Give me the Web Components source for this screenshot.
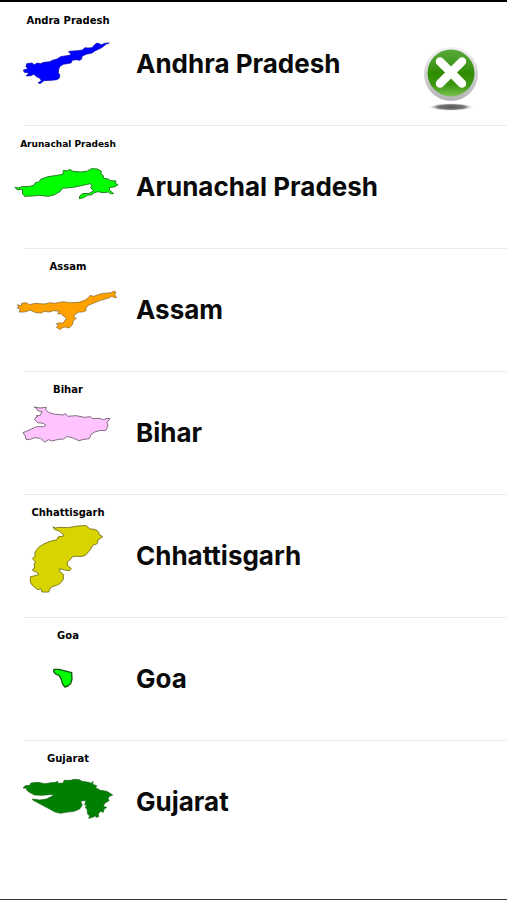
<!DOCTYPE html>
<html lang="en">
<head>
  <meta charset="utf-8">
  <meta name="viewport" content="width=device-width, initial-scale=1">
  <title>States</title>
  <style>
    body {
      margin: 0;
      background: #fff;
      font-family: Inter, "Liberation Sans", sans-serif;
    }
  </style>
</head>
<body>
  <state-picker>
    <close-button slot="action"></close-button>
    <state-row name="Andhra Pradesh" caption="Andra Pradesh">
      <svg viewBox="24 87 360 216" fill="#00f" stroke="#0000a8" stroke-width="2" stroke-linejoin="round"><path d="M328 129L314 130 304 134 292 129 285 133 276 143 264 144 255 143 247 150 233 152 207 154 206 157 213 160 209 166 194 168 182 170 171 177 157 181 150 185 132 187 121 191 112 189 103 194 96 189 80 191 78 200 84 206 70 210 73 217 87 219 78 228 93 227 101 223 110 230 120 235 124 243 114 248 120 251 132 242 155 241 171 239 179 233 179 224 175 218 176 208 180 199 190 193 213 189 217 181 229 179 239 181 245 177 246 169 258 163 276 159 286 152 305 143 319 132Z"/></svg>
    </state-row>
    <state-row name="Arunachal Pradesh" caption="Arunachal Pradesh" long>
      <svg viewBox="24 84 360 216" fill="#0f0" stroke="#258025" stroke-width="3" stroke-linejoin="round"><path d="M45 190L55 192 66 188 91 187 102 183 107 175 116 175 122 166 144 158 165 155 189 151 190 139 201 141 209 136 219 142 243 144 263 141 274 134 292 135 304 142 303 150 310 155 310 163 321 164 332 170 348 171 346 178 354 182 345 188 328 191 329 199 341 209 331 209 326 204 309 206 294 203 283 206 276 212 262 214 251 221 238 224 239 216 247 209 268 208 281 200 272 192 276 184 270 179 244 185 220 190 187 193 181 202 164 212 145 217 118 214 96 216 73 217 71 211 67 210 68 197 51 197Z"/></svg>
    </state-row>
    <state-row name="Assam" caption="Assam">
      <svg viewBox="24 81 360 216" fill="#ffa200" stroke="#7b622d" stroke-width="2" stroke-linejoin="round"><path d="M52 170L64 173 65 166 78 164 89 170 105 166 133 168 150 164 164 166 190 161 209 164 236 163 254 157 263 151 271 142 281 145 304 137 334 134 339 130 348 132 344 140 350 148 341 149 336 144 329 149 302 157 282 165 267 171 258 179 258 188 248 192 237 192 225 199 221 208 229 211 219 219 218 229 208 240 196 237 187 239 181 245 169 238 176 231 169 228 179 224 188 226 195 217 199 210 190 204 184 197 173 198 178 190 161 188 148 192 132 190 125 195 108 194 91 187 72 192 57 192 61 183 51 179 57 177Z"/></svg>
    </state-row>
    <state-row name="Bihar" caption="Bihar">
      <svg viewBox="24 78 360 216" fill="#ffc4ff" stroke="#806d80" stroke-width="3" stroke-linejoin="round"><path d="M102 105L120 108 139 106 137 113 147 122 166 127 191 129 196 124 203 133 228 131 253 136 271 134 278 140 297 139 311 143 321 139 330 140 321 151 324 162 317 176 302 175 284 180 273 187 268 200 252 202 237 206 221 199 202 193 191 201 176 202 155 207 146 203 134 210 121 199 103 197 89 203 78 202 76 192 69 182 79 178 94 171 110 164 130 164 138 160 130 154 113 152 104 143 107 136 114 134 109 131 121 130 126 119 113 116 111 110Z"/></svg>
    </state-row>
    <state-row name="Chhattisgarh" caption="Chhattisgarh">
      <svg viewBox="24 81 360 216" fill="#d8d400" stroke="#827e24" stroke-width="3" stroke-linejoin="round"><path d="M159 98L166 102 180 100 206 101 226 97 247 95 259 95 270 105 284 106 294 112 299 123 308 128 294 138 291 149 278 154 271 167 257 183 246 187 218 187 212 196 202 203 202 214 214 224 209 230 194 228 179 224 180 234 190 241 190 256 181 268 170 274 157 278 150 284 146 294 126 294 123 284 113 287 97 274 91 264 91 248 102 246 116 242 110 234 97 229 104 219 102 210 107 204 97 194 105 187 105 174 116 160 131 150 151 142 171 137 174 129 191 126 190 121 177 111 163 106Z"/></svg>
    </state-row>
    <state-row name="Goa" caption="Goa">
      <svg viewBox="24 78 360 216" fill="#0f0" stroke="#0c580c" stroke-width="4" stroke-linejoin="round"><path d="M162 154L177 154 192 158 215 164 216 184 212 197 203 204 194 207 187 196 184 184 178 173 167 168 161 161Z"/></svg>
    </state-row>
    <state-row name="Gujarat" caption="Gujarat" last>
      <svg viewBox="24 81 360 216" fill="#008000" stroke="#176317" stroke-width="2" stroke-linejoin="round"><path d="M69 144L76 137 89 136 93 129 113 127 135 131 153 128 166 127 173 124 174 130 190 129 192 121 212 121 222 118 238 119 246 124 266 127 273 130 279 124 278 133 290 137 287 143 301 151 320 154 330 160 338 165 329 169 324 174 327 182 316 188 309 199 320 202 312 208 310 217 302 214 295 221 296 230 288 232 287 227 278 232 266 235 269 228 263 222 261 207 256 203 260 194 254 195 258 182 247 182 242 185 247 195 239 207 222 214 197 217 182 220 165 216 145 205 122 193 98 180 98 177 119 180 139 177 156 169 161 163 147 164 126 166 104 165 88 157 79 149 81 145Z"/></svg>
    </state-row>
  </state-picker>

  <script>
    class StatePicker extends HTMLElement {
      constructor() {
        super();
        this.attachShadow({ mode: "open" });
      }

      getStyles() {
        return `
    <style>
      :host {
        display: block;
        position: relative;
        box-sizing: border-box;
        min-height: 100vh;
        padding-top: 1px;
        border-top: 2px solid #000;
        border-bottom: 1px solid #333;
        background: #fff;
      }

      .action {
        position: absolute;
        top: 42px;
        right: 27px;
      }
    </style>
    `;
      }

      connectedCallback() {
        this.shadowRoot.innerHTML = `
    ${this.getStyles()}
    <div role="list"><slot></slot></div>
    <div class="action"><slot name="action"></slot></div>
    `;
      }
    }

    class StateRow extends HTMLElement {
      constructor() {
        super();
        this.attachShadow({ mode: "open" });
      }

      getStyles() {
        return `
    <style>
      :host {
        display: block;
      }

      .row {
        display: flex;
        gap: 8px;
        height: 122px;
        padding: 0 8px;
      }

      figure {
        flex: none;
        width: 120px;
        margin: 0;
        padding-top: 10px;
        box-sizing: border-box;
      }

      figcaption {
        font: bold 10px/16px "DejaVu Sans", sans-serif;
        text-align: center;
        white-space: nowrap;
        color: #000;
      }

      :host([long]) figcaption {
        font-size: 9px;
      }

      ::slotted(svg) {
        display: block;
        width: 120px;
        height: 72px;
      }

      h2 {
        align-self: center;
        margin: 0;
        font-size: 26px;
        font-weight: 700;
        line-height: 32px;
        color: #0a0a0a;
      }

      hr {
        height: 1px;
        margin: 0 0 0 24px;
        border: 0;
        background: #ebebeb;
      }

      :host([last]) hr {
        display: none;
      }
    </style>
    `;
      }

      connectedCallback() {
        this.setAttribute("role", "listitem");
        this.shadowRoot.innerHTML = `
    ${this.getStyles()}
    <div class="row">
      <figure>
        <figcaption>${this.getAttribute("caption")}</figcaption>
        <slot></slot>
      </figure>
      <h2>${this.getAttribute("name")}</h2>
    </div>
    <hr>
    `;
      }
    }

    class CloseButton extends HTMLElement {
      constructor() {
        super();
        this.attachShadow({ mode: "open" });
      }

      getStyles() {
        return `
    <style>
      :host {
        display: block;
      }

      button {
        display: block;
        padding: 0;
        border: 0;
        background: none;
        cursor: pointer;
      }

      svg {
        display: block;
        width: 58px;
        height: 70px;
      }
    </style>
    `;
      }

      connectedCallback() {
        this.shadowRoot.innerHTML = `
    ${this.getStyles()}
    <button type="button" aria-label="Close">
      <svg viewBox="0 0 58 70">
        <defs>
          <linearGradient id="rim" x1="0" y1="0" x2="0" y2="1">
            <stop offset="0" stop-color="#f0f0f2"/>
            <stop offset=".5" stop-color="#d2d2d5"/>
            <stop offset="1" stop-color="#b4b4b8"/>
          </linearGradient>
          <linearGradient id="shine" x1="0" y1="0" x2="0" y2="1">
            <stop offset="0" stop-color="#58a83a"/>
            <stop offset=".4" stop-color="#3c9413"/>
            <stop offset=".5" stop-color="#2f8c00"/>
            <stop offset=".75" stop-color="#3b9712"/>
            <stop offset="1" stop-color="#7cc152"/>
          </linearGradient>
          <radialGradient id="shadow">
            <stop offset="0" stop-color="#555"/>
            <stop offset=".6" stop-color="#777"/>
            <stop offset="1" stop-color="#fff" stop-opacity="0"/>
          </radialGradient>
        </defs>
        <ellipse cx="29" cy="63" rx="23" ry="4" fill="url(#shadow)"/>
        <circle cx="29" cy="30" r="27" fill="url(#rim)"/>
        <circle cx="29" cy="29" r="23.500" fill="url(#shine)"/>
        <path d="M18 17.500L40 39.500M40 17.500L18 39.500" stroke="#fff" stroke-width="8.500" stroke-linecap="round"/>
      </svg>
    </button>
    `;
      }
    }

    customElements.define("state-picker", StatePicker);
    customElements.define("state-row", StateRow);
    customElements.define("close-button", CloseButton);
  </script>
</body>
</html>
